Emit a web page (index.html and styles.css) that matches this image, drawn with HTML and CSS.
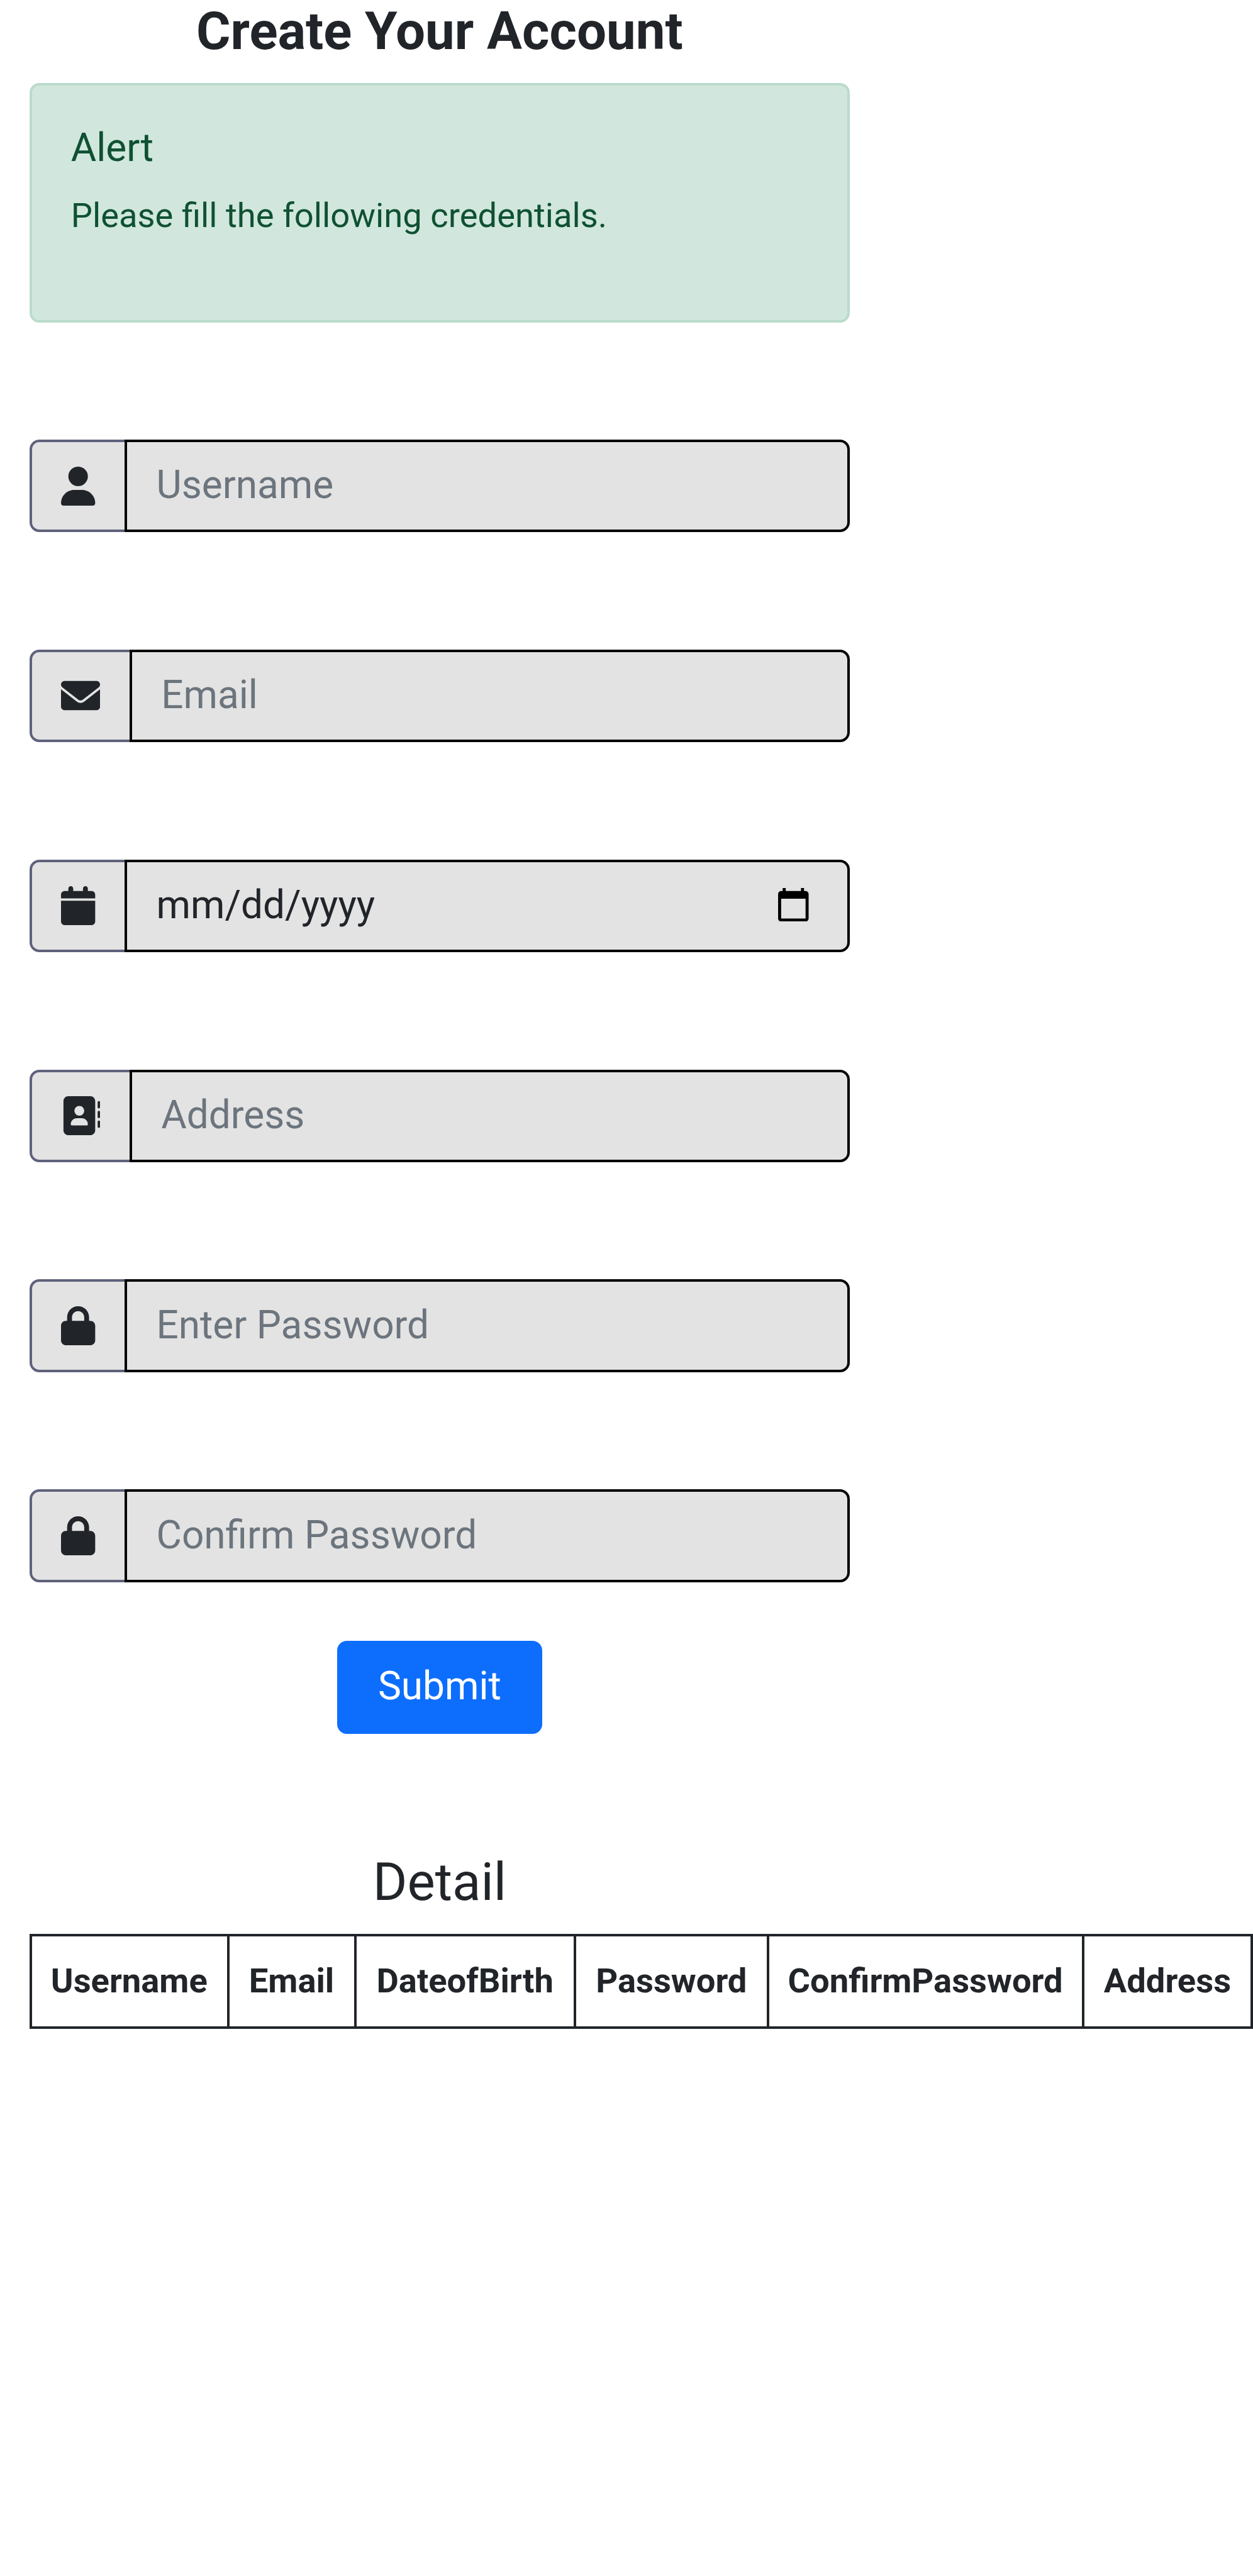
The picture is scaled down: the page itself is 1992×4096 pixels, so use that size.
FILE: index.html
```html
<!DOCTYPE html>
<html lang="en">
<head>
<meta charset="utf-8">
<title>Create Your Account</title>
<link rel="stylesheet" href="styles.css">
</head>
<body>
<main class="container">
  <h4 class="title">Create Your Account</h4>
  <div class="alert">
    <div class="alert-heading">Alert</div>
    <p class="alert-text">Please fill the following credentials.</p>
  </div>
  <form class="form">
    <div class="input-group">
      <span class="addon"><svg class="icon" viewBox="0 0 448 512"><circle cx="224" cy="128" r="128"/><path d="M274.7 304H173.3C77.61 304 0 381.6 0 477.3C0 496.5 15.52 512 34.66 512h378.7C432.5 512 448 496.5 448 477.3C448 381.6 370.4 304 274.7 304z"/></svg></span>
      <input class="control" type="text" placeholder="Username">
    </div>
    <div class="input-group">
      <span class="addon addon-wide"><svg class="icon icon-wide" viewBox="0 0 512 512"><path d="M256 352c-16.53 0-33.06-5.422-47.16-16.41L0 173.2V400C0 426.5 21.49 448 48 448h416c26.51 0 48-21.49 48-48V173.2l-208.8 162.5C289.1 346.6 272.5 352 256 352zM16.29 145.3l212.2 165.1c16.19 12.6 38.87 12.6 55.06 0l212.2-165.1C505.1 137.3 512 125 512 112C512 85.49 490.5 64 464 64h-416C21.49 64 0 85.49 0 112C0 125 6.01 137.3 16.29 145.3z"/></svg></span>
      <input class="control" type="text" placeholder="Email">
    </div>
    <div class="input-group">
      <span class="addon"><svg class="icon" viewBox="0 0 448 512"><path d="M96 32C96 14.33 110.3 0 128 0C145.7 0 160 14.33 160 32V64H288V32C288 14.33 302.3 0 320 0C337.7 0 352 14.33 352 32V64H400C426.5 64 448 85.49 448 112V160H0V112C0 85.49 21.49 64 48 64H96V32zM448 464C448 490.5 426.5 512 400 512H48C21.49 512 0 490.5 0 464V192H448V464z"/></svg></span>
      <div class="control date">
        <span class="date-text">mm/dd/yyyy</span>
        <svg class="picker" viewBox="0 0 20 22"><path fill-rule="evenodd" d="M3 0h2v2h10V0h2v2h1a2 2 0 0 1 2 2v16a2 2 0 0 1-2 2H2a2 2 0 0 1-2-2V4a2 2 0 0 1 2-2h1zM2 7v13h16V7z"/></svg>
      </div>
    </div>
    <div class="input-group">
      <span class="addon addon-wide"><svg class="icon icon-wide" viewBox="0 0 512 512"><path fill-rule="evenodd" d="M384 0H96C60.65 0 32 28.65 32 64v384c0 35.35 28.65 64 64 64h288c35.35 0 64-28.65 64-64V64C448 28.65 419.3 0 384 0zM240 128c35.35 0 64 28.65 64 64s-28.65 64-64 64c-35.34 0-64-28.65-64-64S204.7 128 240 128zM336 384h-192C135.2 384 128 376.8 128 368C128 323.8 163.8 288 208 288h64c44.18 0 80 35.82 80 80C352 376.8 344.8 384 336 384z"/><rect x="480" y="64" width="32" height="96" rx="16"/><rect x="480" y="192" width="32" height="96" rx="16"/><rect x="480" y="320" width="32" height="96" rx="16"/></svg></span>
      <input class="control" type="text" placeholder="Address">
    </div>
    <div class="input-group">
      <span class="addon"><svg class="icon" viewBox="0 0 448 512"><path d="M80 192V144C80 64.47 144.5 0 224 0C303.5 0 368 64.47 368 144V192H384C419.3 192 448 220.7 448 256V448C448 483.3 419.3 512 384 512H64C28.65 512 0 483.3 0 448V256C0 220.7 28.65 192 64 192H80zM144 192H304V144C304 99.82 268.2 64 224 64C179.8 64 144 99.82 144 144V192z"/></svg></span>
      <input class="control" type="password" placeholder="Enter Password">
    </div>
    <div class="input-group">
      <span class="addon"><svg class="icon" viewBox="0 0 448 512"><path d="M80 192V144C80 64.47 144.5 0 224 0C303.5 0 368 64.47 368 144V192H384C419.3 192 448 220.7 448 256V448C448 483.3 419.3 512 384 512H64C28.65 512 0 483.3 0 448V256C0 220.7 28.65 192 64 192H80zM144 192H304V144C304 99.82 268.2 64 224 64C179.8 64 144 99.82 144 144V192z"/></svg></span>
      <input class="control" type="password" placeholder="Confirm Password">
    </div>
    <button class="submit" type="button">Submit</button>
  </form>
  <h4 class="detail">Detail</h4>
  <div class="table">
    <div class="th">Username</div>
    <div class="th">Email</div>
    <div class="th">DateofBirth</div>
    <div class="th">Password</div>
    <div class="th">ConfirmPassword</div>
    <div class="th">Address</div>
  </div>
</main>
</body>
</html>
```

FILE: styles.css
```css
/* 1rem is ten layout units */
html { font-size: 38.828px; }
*, *::before, *::after { box-sizing: border-box; }
body {
  margin: 0;
  min-height: 4096px;
  overflow: hidden;
  background: #fff;
  color: #212529;
  font-family: Roboto, "Liberation Sans", sans-serif;
  font-size: 1.4rem;
  line-height: 1.5;
}
.container { width: 36rem; padding: 0 1.2rem; }
.title, .detail {
  margin: 0;
  font-size: 2.148rem;
  line-height: 2.6rem;
  text-align: center;
}
.title { font-weight: 700; }
.detail { font-weight: 400; margin-top: 4.8rem; }
.alert {
  height: 9.8rem;
  margin-top: 0.8rem;
  padding: 1.6rem;
  border: 4px solid #badbcc;
  border-radius: 0.4rem;
  background: #d1e7dd;
  color: #0f5132;
}
.alert-heading { font-size: 1.6rem; line-height: 1.92rem; }
.alert-text { margin: 0.75rem 0 0; line-height: 2.1rem; }
.form {
  display: flex;
  flex-direction: column;
  align-items: center;
  gap: 4.8rem;
  margin-top: 4.8rem;
}
.input-group { display: flex; width: 100%; height: 3.8rem; }
.addon {
  display: flex;
  align-items: center;
  flex: none;
  width: 4.0rem;
  padding-left: 1.2rem;
  border: 4px solid #5f627b;
  border-radius: 0.4rem 0 0 0.4rem;
  background: #e3e3e3;
}
.addon-wide { width: 4.2rem; }
.icon { width: 1.4rem; height: 1.6rem; fill: #212529; }
.icon-wide { width: 1.6rem; }
.control {
  flex: 1;
  min-width: 0;
  margin: 0 0 0 -4px;
  padding: 0 1.2rem 0.1rem;
  border: 4px solid #000;
  border-radius: 0 0.4rem 0.4rem 0;
  background: #e3e3e3;
  color: #212529;
  font-family: inherit;
  font-size: 1.6rem;
  line-height: 2.4rem;
  outline: none;
}
.control::placeholder { color: #6c757d; opacity: 1; }
.date { display: flex; align-items: center; justify-content: space-between; }
.picker { width: 1.25rem; height: 1.375rem; margin-right: 0.38rem; }
.submit {
  width: 8.4rem;
  height: 3.8rem;
  margin-top: -2.4rem;
  padding: 0 0 0.1rem;
  border: 0;
  border-radius: 0.4rem;
  background: #0d6efd;
  color: #fff;
  font-family: inherit;
  font-size: 1.6rem;
}
.table {
  display: grid;
  grid-template-columns: 8.1rem 5.2rem 9rem 7.9rem 12.9rem 7rem;
  width: 50.1rem;
  height: 3.9rem;
  margin-top: 0.8rem;
  border: 4px solid #212529;
  border-width: 4px 0;
}
.th {
  display: flex;
  align-items: center;
  justify-content: center;
  padding: 0 1px 1px 0;
  border-left: 4px solid #212529;
  font-weight: 700;
}
.th:last-child { padding-right: 0; border-right: 4px solid #212529; }
```
